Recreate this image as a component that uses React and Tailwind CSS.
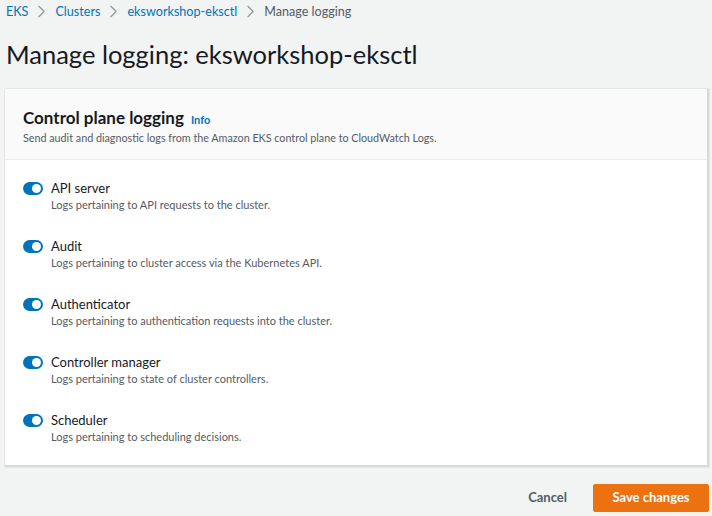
import { ChevronRight } from 'lucide-react'

const LOG_TYPES = [
  { name: 'API server', desc: 'Logs pertaining to API requests to the cluster.' },
  { name: 'Audit', desc: 'Logs pertaining to cluster access via the Kubernetes API.' },
  { name: 'Authenticator', desc: 'Logs pertaining to authentication requests into the cluster.' },
  { name: 'Controller manager', desc: 'Logs pertaining to state of cluster controllers.' },
  { name: 'Scheduler', desc: 'Logs pertaining to scheduling decisions.' },
]

function Toggle() {
  return (
    <div className="w-[20px] h-[13px] rounded-full bg-[#0073bb] flex items-center justify-end pr-[2px] shrink-0">
      <div className="w-[9px] h-[9px] rounded-full bg-white" />
    </div>
  )
}

function Sep() {
  return <ChevronRight size={21} className="text-[#879596] shrink-0" strokeWidth={1.3} />
}

export default function App() {
  return (
    <div className="w-[712px] h-[516px] bg-[#f2f3f3] overflow-hidden text-[#16191f]" style={{ fontFamily: 'Lato, sans-serif' }}>
      {/* Breadcrumbs */}
      <div className="flex items-center gap-[3px] pl-[6px] pt-[1px] h-[22px] text-[12.6px] leading-[18px]">
        <span className="text-[#0073bb]">EKS</span>
        <Sep />
        <span className="text-[#0073bb]">Clusters</span>
        <Sep />
        <span className="text-[#0073bb]">eksworkshop-eksctl</span>
        <Sep />
        <span className="text-[#545b64]">Manage logging</span>
      </div>

      <h1 className="pl-[6px] mt-[15px] text-[25.5px] leading-[34px] font-normal">Manage logging: eksworkshop-eksctl</h1>

      {/* Card */}
      <div className="ml-[5px] mt-[18px] w-[704px] bg-white border-r-2 border-b-2 border-[#d5dbdb] shadow-[0_0_1px_rgba(0,28,36,0.3)]">
        <div className="bg-[#fafafa] border-b border-[#eaeded] px-[18px] pt-[18px] pb-[13px]">
          <div className="flex items-baseline gap-[7px]">
            <h2 className="text-[17px] leading-[22px] font-bold">Control plane logging</h2>
            <span className="text-[11px] font-bold text-[#0073bb]">Info</span>
          </div>
          <p className="text-[10.75px] leading-[16px] text-[#545b64] mt-[1px]">
            Send audit and diagnostic logs from the Amazon EKS control plane to CloudWatch Logs.
          </p>
        </div>

        <div className="px-[18px] pt-[19px] pb-[20px] flex flex-col gap-[24px]">
          {LOG_TYPES.map(t => (
            <div key={t.name} className="flex gap-[8px]">
              <div className="pt-[3px]"><Toggle /></div>
              <div>
                <div className="text-[13px] leading-[18px]">{t.name}</div>
                <div className="text-[11px] leading-[16px] text-[#545b64]">{t.desc}</div>
              </div>
            </div>
          ))}
        </div>
      </div>

      {/* Actions */}
      <div className="flex justify-end items-center gap-[26px] pr-[3px] mt-[17px]">
        <button className="text-[13px] font-bold text-[#545b64]">Cancel</button>
        <button className="bg-[#ec7211] text-white text-[13px] font-bold w-[116px] h-[28px] rounded-[2px] border border-[#ec7211]">Save changes</button>
      </div>
    </div>
  )
}
